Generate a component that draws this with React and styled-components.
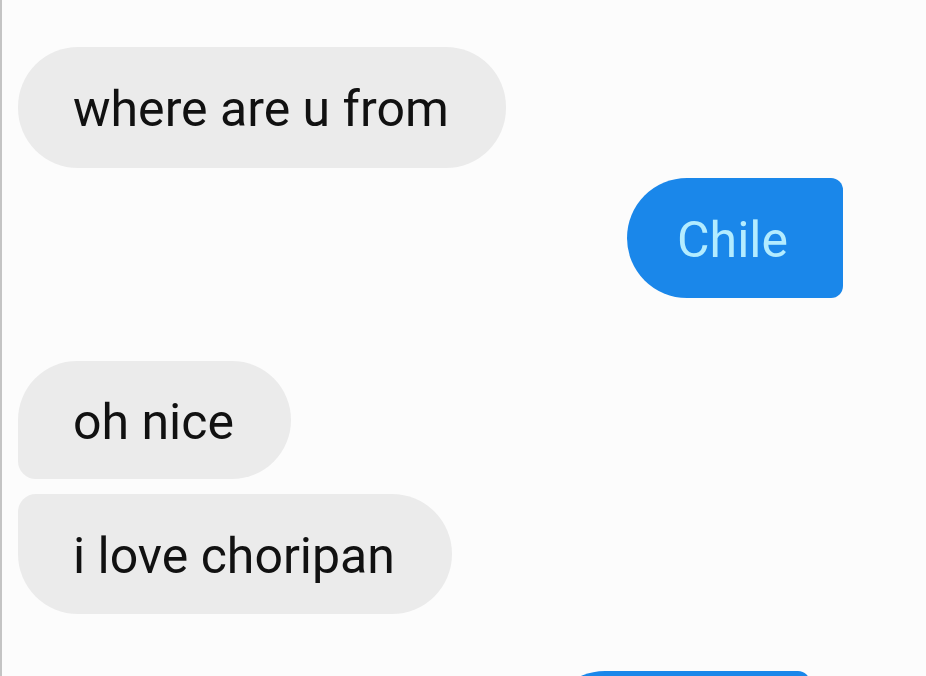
import React from "react";
import styled, { createGlobalStyle } from "styled-components";

const GlobalStyle = createGlobalStyle`
  html, body {
    margin: 0;
    padding: 0;
    background: #fcfcfc;
  }
  body {
    font-family: Roboto, "Noto Sans", sans-serif;
    overflow: hidden;
  }
`;

const Screen = styled.div`
  width: 926px;
  height: 676px;
  box-sizing: border-box;
  border-left: 2px solid #c4c4c4;
  background: #fcfcfc;
  overflow: hidden;
  display: flex;
  flex-direction: column;
  padding: 47px 0 0 16px;
`;

const Bubble = styled.div`
  box-sizing: border-box;
  height: ${(p) => p.$height || 121}px;
  margin-top: ${(p) => p.$gap || 0}px;
  padding: ${(p) => p.$pad || "3px 57px 0 55px"};
  display: flex;
  align-items: center;
  flex-shrink: 0;
  font-size: 50px;
  white-space: nowrap;
  border-radius: ${(p) => p.$radius || "60px"};
  background: ${(p) => (p.$mine ? "#1a87ea" : "#ebebeb")};
  color: ${(p) => (p.$mine ? "#b3ecff" : "#111111")};
  align-self: ${(p) => (p.$mine ? "flex-end" : "flex-start")};
  margin-right: ${(p) => p.$right || 0}px;
  width: ${(p) => (p.$width ? `${p.$width}px` : "auto")};
`;

export default function App() {
  return (
    <>
      <GlobalStyle />
      <Screen>
        <Bubble>where are u from</Bubble>
        <Bubble
          $mine
          $gap={10}
          $right={83}
          $height={120}
          $pad="3px 55px 0 50px"
          $radius="60px 12px 12px 60px"
        >
          Chile
        </Bubble>
        <Bubble $gap={63} $height={118} $radius="60px 60px 60px 18px">
          oh nice
        </Bubble>
        <Bubble $gap={15} $height={120} $radius="18px 60px 60px 60px">
          i love choripan
        </Bubble>
        <Bubble $mine $gap={57} $right={116} $width={265} $height={120} $radius="60px 12px 12px 60px" />
      </Screen>
    </>
  );
}
